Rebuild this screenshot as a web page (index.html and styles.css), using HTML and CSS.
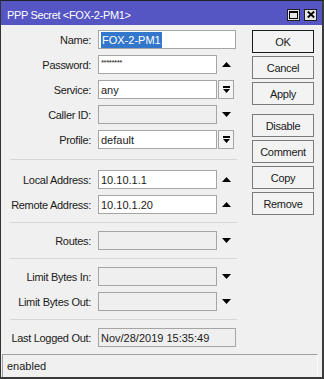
FILE: index.html
```html
<!DOCTYPE html>
<html lang="en">
<head>
    <meta charset="UTF-8">
    <meta name="viewport" content="width=device-width, initial-scale=1.0">
    <title>PPP Secret &lt;FOX-2-PM1&gt;</title>
    <link rel="stylesheet" href="styles.css">
</head>
<body>
    <div class="window">
        <div class="titlebar">
            <span class="title">PPP Secret &lt;FOX-2-PM1&gt;</span>
            <div class="title-buttons">
                <span class="tbtn">
                    <svg width="9" height="8" viewBox="0 0 9 8"><rect x="0.5" y="0.5" width="8" height="7" fill="none" stroke="#000"/><rect x="0" y="0" width="9" height="2" fill="#000"/></svg>
                </span>
                <span class="tbtn">
                    <svg width="8" height="7" viewBox="0 0 8 7"><path d="M0.8 0.5L7.2 6.5M7.2 0.5L0.8 6.5" stroke="#000" stroke-width="1.8"/></svg>
                </span>
            </div>
        </div>

        <div class="content">
            <div class="form">
                <div class="section">
                    <div class="row">
                        <span class="label">Name:</span>
                        <div class="field wide"><span class="sel">FOX-2-PM1</span></div>
                    </div>
                    <div class="row">
                        <span class="label">Password:</span>
                        <div class="field pass">********</div>
                        <span class="arrow"><svg width="9" height="5" viewBox="0 0 9 5"><polygon points="0,5 9,5 4.5,0" fill="#000"/></svg></span>
                    </div>
                    <div class="row">
                        <span class="label">Service:</span>
                        <div class="field">any</div>
                        <span class="arrow boxed"><svg width="7" height="7" viewBox="0 0 7 7"><rect x="0" y="0" width="7" height="2" fill="#000"/><polygon points="0,3 7,3 3.5,7" fill="#000"/></svg></span>
                    </div>
                    <div class="row">
                        <span class="label">Caller ID:</span>
                        <div class="field off"></div>
                        <span class="arrow"><svg width="9" height="5" viewBox="0 0 9 5"><polygon points="0,0 9,0 4.5,5" fill="#000"/></svg></span>
                    </div>
                    <div class="row">
                        <span class="label">Profile:</span>
                        <div class="field">default</div>
                        <span class="arrow boxed"><svg width="7" height="7" viewBox="0 0 7 7"><rect x="0" y="0" width="7" height="2" fill="#000"/><polygon points="0,3 7,3 3.5,7" fill="#000"/></svg></span>
                    </div>
                </div>

                <div class="sep first"></div>

                <div class="section">
                    <div class="row">
                        <span class="label">Local Address:</span>
                        <div class="field">10.10.1.1</div>
                        <span class="arrow"><svg width="9" height="5" viewBox="0 0 9 5"><polygon points="0,5 9,5 4.5,0" fill="#000"/></svg></span>
                    </div>
                    <div class="row">
                        <span class="label">Remote Address:</span>
                        <div class="field">10.10.1.20</div>
                        <span class="arrow"><svg width="9" height="5" viewBox="0 0 9 5"><polygon points="0,5 9,5 4.5,0" fill="#000"/></svg></span>
                    </div>
                </div>

                <div class="sep"></div>

                <div class="section">
                    <div class="row">
                        <span class="label">Routes:</span>
                        <div class="field off"></div>
                        <span class="arrow"><svg width="9" height="5" viewBox="0 0 9 5"><polygon points="0,0 9,0 4.5,5" fill="#000"/></svg></span>
                    </div>
                </div>

                <div class="sep"></div>

                <div class="section">
                    <div class="row">
                        <span class="label">Limit Bytes In:</span>
                        <div class="field off"></div>
                        <span class="arrow"><svg width="9" height="5" viewBox="0 0 9 5"><polygon points="0,0 9,0 4.5,5" fill="#000"/></svg></span>
                    </div>
                    <div class="row">
                        <span class="label">Limit Bytes Out:</span>
                        <div class="field off"></div>
                        <span class="arrow"><svg width="9" height="5" viewBox="0 0 9 5"><polygon points="0,0 9,0 4.5,5" fill="#000"/></svg></span>
                    </div>
                </div>

                <div class="sep"></div>

                <div class="section">
                    <div class="row">
                        <span class="label">Last Logged Out:</span>
                        <div class="field wide off">Nov/28/2019 15:35:49</div>
                    </div>
                </div>
            </div>

            <div class="buttons">
                <button class="btn default">OK</button>
                <button class="btn">Cancel</button>
                <button class="btn">Apply</button>
                <button class="btn group">Disable</button>
                <button class="btn">Comment</button>
                <button class="btn">Copy</button>
                <button class="btn">Remove</button>
            </div>
        </div>

        <div class="statusbar">enabled</div>
    </div>
</body>
</html>
```

FILE: styles.css
```css
 body {
     margin: 0;
     padding: 0;
     font-family: "Liberation Sans", Arial, sans-serif;
     font-size: 11px;
     color: #1a1a1a;
     background-color: #f0f0f0;
 }

.window {
     width: 324px;
     height: 379px;
     box-sizing: border-box;
     display: flex;
     flex-direction: column;
     background-color: #f0f0f0;
     border-top: 1px solid #222;
     border-left: 1px solid #333;
     border-right: 2px solid #3a3a3a;
     border-bottom: 2px solid #3a3a3a;
 }

.titlebar {
     height: 24px;
     box-sizing: border-box;
     padding: 3px 5px 0 6px;
     display: flex;
     align-items: center;
     justify-content: space-between;
     background-color: #5555c4;
     color: #fff;
 }

.title {
     font-size: 11px;
     letter-spacing: -0.35px;
 }

.title-buttons {
     display: flex;
     gap: 4px;
 }

.tbtn {
     width: 13px;
     height: 12px;
     box-sizing: border-box;
     display: flex;
     align-items: center;
     justify-content: center;
     background-color: #e4e4e4;
     border: 1px solid #202020;
 }

.content {
     flex: 1;
     display: flex;
     padding-top: 5px;
 }

.form {
     width: 240px;
 }

.section {
     display: flex;
     flex-direction: column;
     gap: 6px;
 }

.row {
     display: flex;
     align-items: center;
     height: 19px;
 }

.label {
     width: 90px;
     margin-right: 7px;
     text-align: right;
     letter-spacing: -0.3px;
     white-space: nowrap;
 }

.field {
     width: 119px;
     height: 19px;
     box-sizing: border-box;
     padding: 0 2px;
     display: flex;
     align-items: center;
     background-color: #fff;
     border: 1px solid #a5a5a5;
     white-space: nowrap;
 }

.field.wide {
     width: 138px;
 }

.field.off {
     background-color: #efefef;
 }

.field.pass {
     font-size: 8px;
     align-items: flex-start;
     padding-top: 2px;
     letter-spacing: -0.5px;
 }

.sel {
     padding: 2px 1px 2px 1px;
     background-color: #3377cc;
     color: #fff;
 }

.arrow {
     width: 17px;
     height: 19px;
     margin-left: 1px;
     box-sizing: border-box;
     display: flex;
     align-items: center;
     justify-content: center;
 }

.arrow.boxed {
     width: 16px;
     background-color: #f4f4f4;
     border: 1px solid #a5a5a5;
 }

.sep {
     margin: 8px 0 8px 9px;
     width: 227px;
     border-top: 1px solid #d6d6d6;
 }

.sep.first {
     margin: 10px 0 10px 9px;
 }

.buttons {
     margin-left: 11px;
     display: flex;
     flex-direction: column;
     gap: 3px;
 }

.btn {
     width: 62px;
     height: 23px;
     padding: 0;
     font-family: "Liberation Sans", Arial, sans-serif;
     font-size: 11px;
     letter-spacing: -0.3px;
     color: #1a1a1a;
     background-color: #f3f3f3;
     border: 1px solid #7a7a7a;
     border-radius: 0;
 }

.btn.default {
     border-color: #1a1a1a;
 }

.btn.group {
     margin-top: 6px;
 }

.statusbar {
     height: 23px;
     box-sizing: border-box;
     margin: 0 4px 0 1px;
     padding-left: 4px;
     display: flex;
     align-items: center;
     border-top: 1px solid #a0a0a0;
     border-left: 1px solid #a0a0a0;
     border-right: 1px solid #fafafa;
 }
```
